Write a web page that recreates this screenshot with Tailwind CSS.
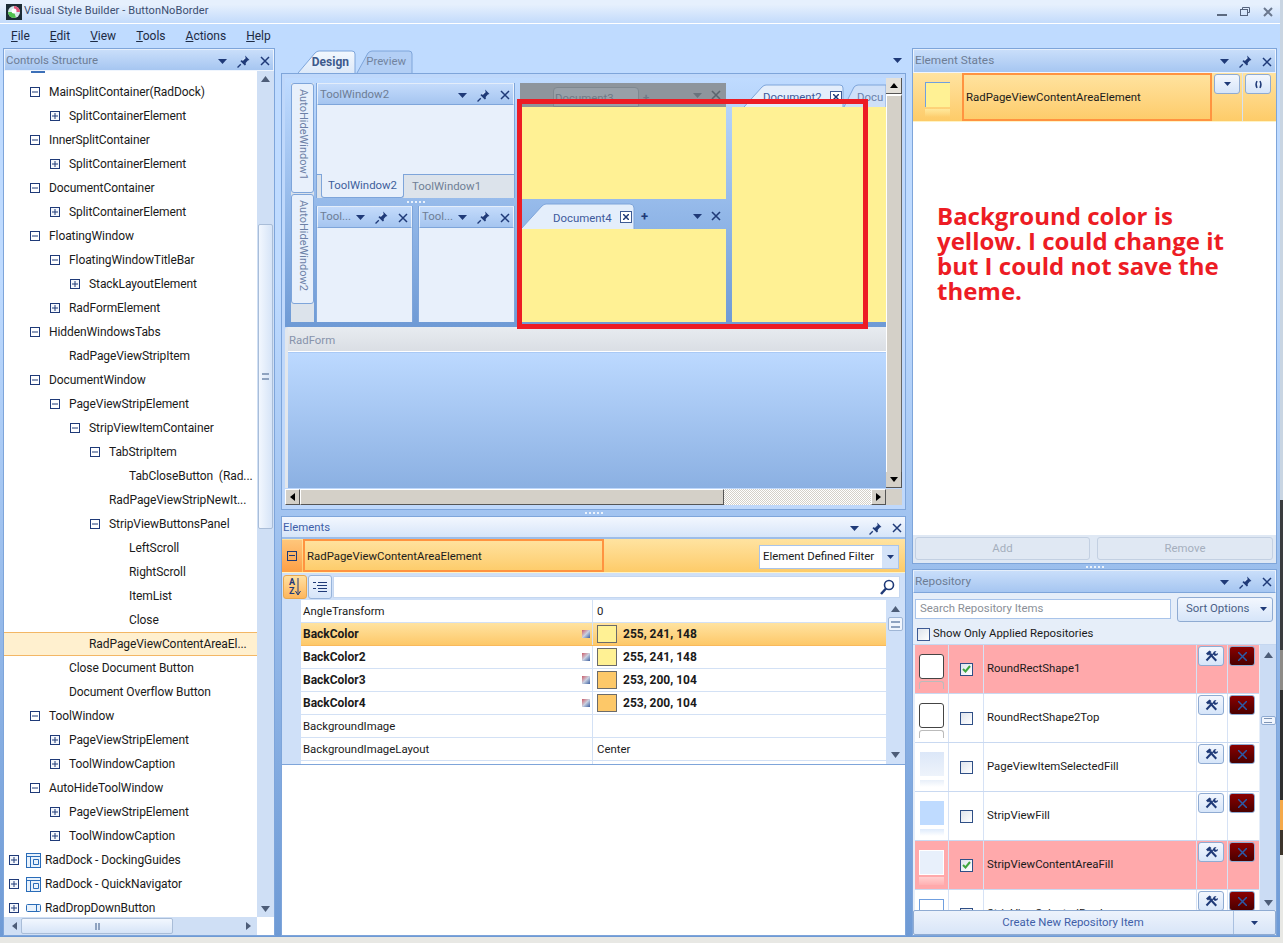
<!DOCTYPE html>
<html lang="en">
<head>
  <meta charset="UTF-8" />
  <title>Visual Style Builder - ButtonNoBorder</title>
  <script src="https://cdn.jsdelivr.net/npm/@tailwindcss/browser@4"></script>
</head>
<body class="m-0 bg-[#e8e8e4] font-['Roboto',sans-serif] text-[11.4px] text-[#1a1a1a]">
<div class="relative w-[1283px] h-[943px] overflow-hidden flex">

  <div class="w-[1280px] h-[937px] flex flex-col bg-linear-to-b from-[#bfdbff] from-30% to-[#6e9ad5]">

    <!-- Title bar -->
    <div class="h-[24px] shrink-0 flex items-center pl-[6px] border-b border-white bg-linear-to-b from-[#e6f0fd] from-20% to-[#c3dbfb] text-[#3c4e70] text-[11px]">
      <svg width="16" height="16" viewBox="0 0 16 16" class="mr-[2px]">
        <rect width="16" height="16" fill="#1c2c35"/>
        <circle cx="8" cy="8" r="6" fill="#d8e8ec"/>
        <path d="M8 2a6 6 0 0 1 6 6H8z" fill="#e0567a"/>
        <path d="M2 8a6 6 0 0 0 6 6 6 6 0 0 0 2-.4L8 8z" fill="#52c04f"/>
        <circle cx="8" cy="7" r="2.5" fill="#ffffff"/>
      </svg>
      <span class="tracking-[0.1px]">Visual Style Builder - ButtonNoBorder</span>
      <div class="ml-auto flex items-center gap-[13px] pr-[7px]">
        <div class="w-[10px] h-[2px] mt-[6px] bg-[#5c6a80]"></div>
        <svg width="10" height="9" viewBox="0 0 10 9" fill="none" stroke="#55637c"><path d="M2.5 2V.5h7v5H8"/><rect x=".5" y="2.5" width="7" height="6"/></svg>
        <svg width="10" height="10" viewBox="0 0 10 10" stroke="#6b788e" stroke-width="2"><path d="M1 1l8 8M9 1L1 9"/></svg>
      </div>
    </div>

    <!-- Menu -->
    <div class="h-[24px] shrink-0 flex items-center gap-[20px] pl-[11px] text-[12px] text-[#1c2a44]">
      <span><u>F</u>ile</span><span><u>E</u>dit</span><span><u>V</u>iew</span><span><u>T</u>ools</span><span><u>A</u>ctions</span><span><u>H</u>elp</span>
    </div>

    <div class="flex-1 min-h-0 flex pl-[3px] pr-[3px] pb-[1px] gap-[6px]">

      <!-- Controls Structure -->
      <div class="w-[272px] shrink-0 flex flex-col border border-[#7ea5da] bg-white">
        <div class="h-[22px] shrink-0 flex items-center pl-[1px] pt-[1px] border border-white/70 bg-linear-to-b from-[#c9defa] to-[#a6c6f1] text-[#6d7d95]">
          Controls Structure<span data-icons class="ml-auto"></span>
        </div>
        <div class="flex-1 min-h-0 flex">
          <div class="relative w-[253px] overflow-hidden text-[12px] tracking-[-0.08px]">
            <div class="absolute left-[27px] top-0 w-[14px] h-[2px] bg-[#3d70b8]"></div>
            <div id="tree" class="pt-[9px]"></div>
          </div>
          <div class="flex-1 bg-[#cfdff5] relative flex flex-col items-center">
            <svg width="9" height="6" class="mt-[5px]"><path d="M0 6L4.5 0 9 6z" fill="#4d5d78"/></svg>
            <div class="w-[15px] h-[305px] mt-[142px] border border-[#a9bdd8] rounded-[2px] bg-linear-to-r from-[#f2f7fe] to-[#d6e4f7] flex items-center justify-center">
              <div class="w-[7px] h-[7px] border-y-[2px] border-[#8fa3c0]"></div>
            </div>
            <svg width="9" height="6" class="mt-auto mb-[5px]"><path d="M0 0L4.5 6 9 0z" fill="#4d5d78"/></svg>
          </div>
        </div>
        <div class="h-[18px] shrink-0 flex">
          <div class="w-[253px] bg-[#cfdff5] flex items-center pl-[8px]">
            <svg width="5" height="8"><path d="M5 0L0 4l5 4z" fill="#4d5d78"/></svg>
            <div class="w-[152px] h-[16px] ml-[4px] border border-[#a9bdd8] rounded-[2px] bg-linear-to-b from-[#f2f7fe] to-[#d6e4f7] flex items-center justify-center">
              <div class="w-[5px] h-[7px] border-x-[2px] border-[#8fa3c0]"></div>
            </div>
            <svg width="5" height="8" class="ml-auto mr-[6px]"><path d="M0 0l5 4-5 4z" fill="#4d5d78"/></svg>
          </div>
        </div>
      </div>

      <!-- Centre column -->
      <div class="w-[625px] shrink-0 flex flex-col pt-[2px]">
        <!-- Design / Preview tabs -->
        <div class="h-[23px] shrink-0 flex items-end pl-[17px] relative text-[12px]">
          <div class="relative w-[58px] h-[23px] flex items-center justify-end pr-[7px] font-bold text-[#3e5a8c]">
            <svg class="absolute inset-0" width="58" height="23"><defs><linearGradient id="t1" x1="0" y1="0" x2="0" y2="1"><stop offset="0" stop-color="#f3f8fe"/><stop offset="1" stop-color="#dde9f9"/></linearGradient></defs><path d="M0 23L17 3Q19 1 21 1H54Q57 1 57 4V23" fill="url(#t1)" stroke="#7ea5da"/></svg>
            <span class="relative">Design</span>
          </div>
          <div class="relative w-[57px] h-[23px] flex items-center justify-end pr-[7px] text-[#72849f]">
            <svg class="absolute inset-0" width="57" height="23"><path d="M1 23L12 3Q14 1 16 1H53Q56 1 56 4V23" fill="#b3cff5" stroke="#7ea5da"/></svg>
            <span class="relative text-[11.4px]">Preview</span>
          </div>
          <svg width="9" height="5" class="absolute right-[4px] top-[8px]"><path d="M0 0h9L4.5 5z" fill="#1f3a78"/></svg>
        </div>

        <!-- Design surface -->
        <div class="h-[437px] shrink-0 border border-[#7ea5da] bg-[#bfd8fb] pl-[3px] pt-[4px] pr-[3px] flex flex-col">
          <div class="flex min-h-0 h-[410px]">
            <div class="w-[601px] flex flex-col">
              <div class="relative h-[249px] shrink-0 overflow-hidden bg-linear-to-b from-[#bfdbff] to-[#6e9ad5] pl-[6px] pt-[5px] flex">
                <!-- AutoHide strip -->
                <div class="w-[23px] h-[239px] shrink-0 flex flex-col gap-[1px] bg-[#dce3eb] text-[11px]">
                  <div class="h-[110px] border border-[#7ea5da] rounded-[3px] bg-[#e8f0fb] flex justify-center pt-[5px] text-[#6c80a6]"><span class="[writing-mode:vertical-rl]">AutoHideWindow1</span></div>
                  <div class="h-[110px] border border-[#7ea5da] rounded-[3px] bg-[#e8f0fb] flex justify-center pt-[5px] text-[#6c80a6]"><span class="[writing-mode:vertical-rl]">AutoHideWindow2</span></div>
                </div>
                <!-- Tool windows -->
                <div class="w-[199px] h-[239px] ml-[2px] shrink-0 flex flex-col">
                  <div class="h-[115px] shrink-0 flex flex-col border-x border-[#7ea5da] bg-[#e8f0fb]">
                    <div class="h-[22px] shrink-0 flex items-center pl-[2px] pt-[1px] border border-white/70 border-b-[#7ea5da] bg-linear-to-b from-[#c4dbfb] to-[#a5c5f0] text-[#6d7d95]">ToolWindow2<span data-icons class="ml-auto"></span></div>
                    <div class="flex-1"></div>
                    <div class="h-[24px] shrink-0 flex bg-[#dce3eb] border-t border-[#7ea5da]">
                      <div class="ml-[4px] w-[83px] -mt-[1px] h-[24px] bg-[#e8f0fb] border-x border-b border-[#7ea5da] rounded-b-[3px] text-[#3e5f9c] flex items-center justify-center">ToolWindow2</div>
                      <div class="pl-[8px] flex items-center text-[#6f7f95]">ToolWindow1</div>
                    </div>
                  </div>
                  <div class="h-[8px] shrink-0 flex items-center justify-center"><div class="w-[18px] border-t-[2px] border-dotted border-white/80"></div></div>
                  <div class="flex-1 flex gap-[5px]">
                    <div class="w-[97px] flex flex-col border-x border-[#7ea5da] bg-[#e8f0fb]">
                      <div class="h-[22px] shrink-0 flex items-center pl-[2px] border border-white/70 border-b-[#7ea5da] bg-linear-to-b from-[#c4dbfb] to-[#a5c5f0] text-[#6d7d95]">Tool...<span data-icons class="ml-auto"></span></div>
                    </div>
                    <div class="w-[97px] flex flex-col border-x border-[#7ea5da] bg-[#e8f0fb]">
                      <div class="h-[22px] shrink-0 flex items-center pl-[2px] border border-white/70 border-b-[#7ea5da] bg-linear-to-b from-[#c4dbfb] to-[#a5c5f0] text-[#6d7d95]">Tool...<span data-icons class="ml-auto"></span></div>
                    </div>
                  </div>
                </div>
                <!-- Document3 / Document4 -->
                <div class="w-[206px] h-[239px] ml-[5px] shrink-0 flex flex-col">
                  <div class="h-[24px] shrink-0 relative bg-[#8e959c] text-[#6f7a86]">
                    <div class="absolute left-[33px] top-[4px] w-[86px] h-[20px] bg-[#98a0a8] border border-[#7f8890] rounded-t-[4px] pl-[1px] pt-[2px]">Document3</div>
                    <div class="absolute left-[123px] top-[6px] font-bold">+</div>
                    <svg width="9" height="5" class="absolute left-[173px] top-[10px]"><path d="M0 0h9L4.5 5z" fill="#6a737c"/></svg>
                    <svg width="10" height="10" class="absolute left-[191px] top-[7px]" stroke="#5c656e" stroke-width="1.6"><path d="M1 1l8 8M9 1L1 9"/></svg>
                  </div>
                  <div class="h-[92px] shrink-0 bg-[#fff194]"></div>
                  <div class="h-[3px] shrink-0"></div>
                  <div class="h-[27px] shrink-0 relative">
                    <svg class="absolute left-0 top-0" width="116" height="27"><path d="M1 27L22 4Q24 2 26 2H110Q114 2 114 6V27" fill="#e4eefb" stroke="#7ea5da"/></svg>
                    <span class="absolute left-[33px] top-[8px] text-[#3e5a9c]">Document4</span>
                    <div class="absolute left-[100px] top-[9px] w-[12px] h-[12px] border border-[#3d5a94] bg-white flex items-center justify-center"><svg width="6" height="6" stroke="#1f3a78" stroke-width="1.5"><path d="M0 0l6 6M6 0L0 6"/></svg></div>
                    <span class="absolute left-[121px] top-[8px] text-[13px] leading-[14px] font-bold text-[#1f3a78]">+</span>
                    <svg width="9" height="5" class="absolute left-[173px] top-[12px]"><path d="M0 0h9L4.5 5z" fill="#1f3a78"/></svg>
                    <svg width="10" height="10" class="absolute left-[191px] top-[9px]" stroke="#1f3a78" stroke-width="1.6"><path d="M1 1l8 8M9 1L1 9"/></svg>
                  </div>
                  <div class="flex-1 bg-[#fff194]"></div>
                </div>
                <!-- Document2 -->
                <div class="w-[154px] h-[239px] ml-[6px] shrink-0 flex flex-col">
                  <div class="h-[24px] shrink-0 relative overflow-hidden">
                    <svg class="absolute left-0 top-0" width="154" height="24"><path d="M12 24L30 4Q32 2 34 2H108Q111 2 111 5V24" fill="#e4eefb" stroke="#7ea5da"/><path d="M112 24L122 4Q124 2 126 2H154V24" fill="#cfe0f8" stroke="#7ea5da"/></svg>
                    <span class="absolute left-[31px] top-[6px] text-[#3e5a9c]">Document2</span>
                    <div class="absolute left-[98px] top-[8px] w-[12px] h-[12px] border border-[#3d5a94] bg-white flex items-center justify-center"><svg width="6" height="6" stroke="#1f3a78" stroke-width="1.5"><path d="M0 0l6 6M6 0L0 6"/></svg></div>
                    <span class="absolute left-[125px] top-[6px] text-[#6a80ac]">Docu</span>
                  </div>
                  <div class="flex-1 bg-[#fff194]"></div>
                </div>
              </div>
              <!-- RadForm -->
              <div class="flex-1 min-h-0 flex flex-col bg-[#dfe4ea] rounded-tl-[3px] border-l-[3px] border-[#e3e7ec]">
                <div class="h-[25px] shrink-0 flex items-center pl-[1px] pt-[3px] border-b border-white bg-linear-to-b from-[#e8ecf0] to-[#dadee4] text-[#8793ab]">RadForm</div>
                <div class="flex-1 border-t border-[#a9c9f5] bg-linear-to-b from-[#bcd9ff] to-[#8bb0e2]"></div>
              </div>
            </div>
            <!-- vertical scrollbar -->
            <div class="w-[16px] shrink-0 bg-[#d4d0c8] flex flex-col">
              <div class="h-[16px] shrink-0 border-b border-r border-[#555] bg-[#e4e1da] flex items-center justify-center"><svg width="8" height="5" class="shrink-0"><path d="M0 5L4 0l4 5z" fill="#000"/></svg></div>
              <div class="flex-1 border-r border-[#666] border-t-[2px] border-l border-t-white border-l-white"></div>
              <div class="h-[16px] shrink-0 border-b border-r border-[#555] bg-[#d4d0c8] flex items-center justify-center"><svg width="8" height="5" class="shrink-0"><path d="M0 0l4 5 4-5z" fill="#000"/></svg></div>
            </div>
          </div>
          <!-- horizontal scrollbar -->
          <div class="h-[16px] mt-[1px] shrink-0 flex">
            <div class="w-[15px] border border-white border-b-[#555] border-r-[#555] bg-[#d4d0c8] flex items-center justify-center"><svg width="5" height="8"><path d="M5 0L0 4l5 4z" fill="#000"/></svg></div>
            <div class="w-[424px] border-l border-t border-white border-b border-b-[#555] border-r border-r-[#555] bg-[#d4d0c8]"></div>
            <div class="w-[147px] bg-[repeating-conic-gradient(#d4d0c8_0%_25%,#ffffff_0%_50%)] bg-[length:2px_2px]"></div>
            <div class="w-[15px] border border-white border-b-[#555] border-r-[#555] bg-[#d4d0c8] flex items-center justify-center"><svg width="5" height="8"><path d="M0 0l5 4-5 4z" fill="#000"/></svg></div>
            <div class="w-[16px] bg-[#d4d0c8]"></div>
          </div>
        </div>

        <div class="h-[6px] shrink-0 flex items-center justify-center"><div class="w-[18px] border-t-[2px] border-dotted border-white/80"></div></div>

        <!-- Elements -->
        <div class="flex-1 min-h-0 flex flex-col border border-[#7ea5da] bg-white">
          <div class="h-[22px] shrink-0 flex items-center pl-[1px] pt-[1px] bg-linear-to-b from-[#f3f7fe] to-[#d6e5f9] text-[#3f5fa8] border-b-[2px] border-[#9dbde8]">
            Elements<span data-icons class="ml-auto"></span>
          </div>
          <div class="h-[34px] shrink-0 flex items-center bg-linear-to-b from-[#ffe3a0] to-[#fdcb68] border-b border-[#fff3c4]">
            <div class="w-[20px] h-[32px] mr-[1px] bg-linear-to-b from-[#ffc67a] to-[#fd9f44] flex items-center justify-center"><div class="w-[10px] h-[10px] border border-[#1f3a78] flex items-center justify-center"><div class="w-[6px] h-[1px] bg-[#1f3a78]"></div></div></div>
            <div class="w-[301px] h-[33px] border-[2px] border-[#ff9340] flex items-center pl-[2px] pt-[3px] text-[#1b1b1b]">RadPageViewContentAreaElement</div>
            <div class="ml-auto mr-[6px] mt-[2px] w-[140px] h-[24px] flex items-center border border-[#a9c4ea] bg-white pl-[3px]">Element Defined Filter
              <div class="ml-auto w-[16px] h-full bg-[#d4e3f8] flex items-center justify-center"><svg width="7" height="4"><path d="M0 0h7L3.5 4z" fill="#1f3a78"/></svg></div>
            </div>
          </div>
          <div class="h-[27px] shrink-0 flex items-center bg-[#cfe0f8] pl-[1px] pr-[5px]">
            <div class="w-[24px] h-[24px] rounded-[3px] border border-[#e8a850] bg-linear-to-b from-[#ffe0a0] to-[#fdb65c] flex items-center justify-center text-[#1f3a78] text-[9px] leading-[9px] font-bold"><span class="flex flex-col"><span>A</span><span>Z</span></span><svg width="6" height="18"><path d="M3 0v16M0.5 13L3 17l2.5-4" stroke="#1f3a78" fill="none"/></svg></div>
            <div class="w-[24px] h-[24px] ml-[1px] rounded-[3px] border border-[#98b4da] bg-linear-to-b from-[#f3f7fe] to-[#d6e5f9] flex items-center justify-center"><svg width="14" height="14" stroke="#1f3a78"><path d="M0 2.500h3M5 2.500h9M4 5.500h10M0 8.500h3M5 8.500h9M5 11.500h9"/></svg></div>
            <div class="flex-1 h-[22px] ml-[1px] bg-white border border-[#c5d7f0] flex items-center justify-end pr-[4px]"><svg width="16" height="16" fill="none" stroke="#1f3a78"><circle cx="10" cy="6" r="4.500" stroke-width="1.600"/><path d="M7 9.500L2 15" stroke-width="2.500"/></svg></div>
          </div>
          <div class="h-[165px] shrink-0 flex border-b border-[#7ea5da] overflow-hidden">
            <div class="w-[19px] shrink-0 bg-[#cfe0f8]"></div>
            <div id="grid" class="w-[585px] shrink-0"></div>
            <div class="flex-1 bg-[#cfe0f8] flex flex-col items-center">
              <svg width="9" height="6" class="mt-[6px]"><path d="M0 6L4.5 0 9 6z" fill="#4d5d78"/></svg>
              <div class="w-[15px] h-[14px] mt-[5px] border border-[#9fb6d6] rounded-[2px] bg-[#f0f5fd] flex items-center justify-center"><div class="w-[9px] h-[7px] border-y-[2px] border-[#8fa3c0]"></div></div>
              <svg width="9" height="6" class="mt-auto mb-[6px]"><path d="M0 0L4.5 6 9 0z" fill="#4d5d78"/></svg>
            </div>
          </div>
        </div>
      </div>

      <!-- Right column -->
      <div class="flex-1 min-w-0 flex flex-col">
        <!-- Element States -->
        <div class="h-[516px] shrink-0 flex flex-col border border-[#7ea5da] bg-white">
          <div class="h-[24px] shrink-0 flex items-center pl-[1px] border border-white/70 bg-linear-to-b from-[#c9defa] to-[#a6c6f1] text-[#6d7d95] text-[11.8px]">
            Element States<span data-icons class="ml-auto"></span>
          </div>
          <div class="h-[49px] shrink-0 flex bg-linear-to-b from-[#ffe3a0] to-[#fdcb68] border-b border-[#fff3c4]">
            <div class="w-[49px] flex flex-col items-center pt-[9px]">
              <div class="w-[25px] h-[25px] border-t border-l border-[#6f9fe0] bg-[#fff194]"></div>
              <div class="w-[25px] h-[8px] mt-[2px] bg-linear-to-b from-[#ffe89a] to-transparent"></div>
            </div>
            <div class="w-[250px] border-[2px] border-[#ff9340] flex items-center pl-[2px] pt-[2px] text-[#1b1b1b]">RadPageViewContentAreaElement</div>
            <div class="w-[31px] border-r border-[#d6e2f2] pt-[1px] pl-[2px]">
              <div class="w-[26px] h-[20px] border border-[#8fabd2] rounded-[3px] bg-linear-to-b from-[#f3f7fe] to-[#d6e5f9] flex items-center justify-center"><svg width="7" height="4"><path d="M0 0h7L3.500 4z" fill="#1f3a78"/></svg></div>
            </div>
            <div class="pt-[1px] pl-[2px]">
              <div class="w-[26px] h-[20px] border border-[#8fabd2] rounded-[3px] bg-linear-to-b from-[#f3f7fe] to-[#d6e5f9] flex items-center justify-center"><svg width="9" height="9" fill="none" stroke="#1f3a78" stroke-width="1.400"><path d="M3 1Q1 4.500 3 8M6 1Q8 4.500 6 8"/></svg></div>
            </div>
          </div>
          <div class="flex-1 min-h-0 pt-[81px] pl-[24px] text-[#ed1c24] text-[24px] leading-[25px] font-bold font-['Open_Sans',sans-serif] whitespace-nowrap">Background color is<br />yellow. I could change it<br />but I could not save the<br />theme.</div>
          <div class="h-[28px] shrink-0 flex gap-[7px] px-[2px] pt-[2px] bg-[#dfe8f4]">
            <div class="w-[175px] h-[23px] border border-[#c3d0e2] rounded-[3px] bg-[#e0e8f3] flex items-center justify-center text-[#a5afbd]">Add</div>
            <div class="w-[176px] h-[23px] border border-[#c3d0e2] rounded-[3px] bg-[#e0e8f3] flex items-center justify-center text-[#a5afbd]">Remove</div>
          </div>
        </div>
        <div class="h-[5px] shrink-0 flex items-center justify-center"><div class="w-[18px] border-t-[2px] border-dotted border-white/80"></div></div>
        <!-- Repository -->
        <div class="flex-1 min-h-0 flex flex-col border border-[#7ea5da] bg-[#e6eef9]">
          <div class="h-[23px] shrink-0 flex items-center pl-[1px] border border-white/70 border-b-[#7ea5da] bg-linear-to-b from-[#c9defa] to-[#a6c6f1] text-[#6d7d95] text-[11.8px]">
            Repository<span data-icons class="ml-auto"></span>
          </div>
          <div class="h-[29px] shrink-0 flex items-center pl-[2px] pt-[3px]">
            <div class="w-[256px] h-[20px] border border-[#a9c4ea] bg-white flex items-center pl-[4px] text-[#8a8f98]">Search Repository Items</div>
            <div class="w-[96px] h-[25px] ml-[6px] border border-[#8fabd2] rounded-[3px] bg-linear-to-b from-[#f3f7fe] to-[#d6e5f9] flex items-center pl-[8px] text-[#4a5f86]">Sort Options<svg width="7" height="4" class="ml-auto mr-[5px]"><path d="M0 0h7L3.500 4z" fill="#1f3a78"/></svg></div>
          </div>
          <div class="h-[22px] shrink-0 flex items-center pl-[4px] pt-[2px] gap-[3px]"><div class="w-[13px] h-[13px] border border-[#3d5a94] bg-linear-to-br from-[#dfe4ec] to-white"></div>Show Only Applied Repositories</div>
          <div class="flex-1 min-h-0 flex border-t border-[#c5d7f0] overflow-hidden">
            <div id="repo" class="w-[344px] shrink-0 ml-[2px] overflow-hidden h-[267px] bg-white"></div>
            <div class="flex-1 h-[265px] bg-[#cbdcf4] flex flex-col items-center ml-[1px]">
              <svg width="9" height="6" class="mt-[7px]"><path d="M0 6L4.500 0 9 6z" fill="#4d5d78"/></svg>
              <div class="w-[15px] h-[9px] mt-[58px] border border-[#8fabd2] rounded-[2px] bg-[#f0f5fd] flex items-center justify-center"><div class="w-[8px] h-[5px] border-y border-[#7f95b5]"></div></div>
              <svg width="9" height="6" class="mt-auto mb-[4px]"><path d="M0 0L4.500 6 9 0z" fill="#4d5d78"/></svg>
            </div>
          </div>
          <div class="h-[25px] shrink-0 flex border border-[#8fabd2] rounded-[2px] bg-linear-to-b from-[#edf3fc] to-[#d8e5f8] text-[#3f5fa8]">
            <div class="flex-1 flex items-center justify-center pr-[1px] border-r border-[#a9c0e0]">Create New Repository Item</div>
            <div class="w-[41px] flex items-center justify-center"><svg width="7" height="4"><path d="M0 0h7L3.500 4z" fill="#1f3a78"/></svg></div>
          </div>
        </div>
      </div>
    </div>
  </div>

  <!-- window behind, seen at the right edge -->
  <div class="w-[3px] h-[943px] shrink-0 flex flex-col">
    <div class="h-[500px] bg-[#c9d5e2]"></div>
    <div class="h-[150px] bg-[#3a3c3e]"></div>
    <div class="h-[40px] bg-[#8d8a86]"></div>
    <div class="h-[110px] bg-[#2e2e2e]"></div>
    <div class="h-[30px] bg-[#f4a94a]"></div>
    <div class="h-[25px] bg-[#3c342a]"></div>
    <div class="flex-1 bg-[#e8e8e4]"></div>
  </div>

  <!-- annotation -->
  <div class="absolute left-[517px] top-[99px] w-[351px] h-[230px] border-[5px] border-[#ed1c24]"></div>
</div>

<script>
  // header buttons shared by all the dock panels
  const headerIcons = `<span class="inline-flex items-center gap-[10px] pr-[3px]">
    <svg width="9" height="5"><path d="M0 0h9L4.500 5z" fill="#1f3a78"/></svg>
    <svg width="13" height="13" viewBox="0 0 12 12"><path d="M7.500 .5l4 4-1.500.5-2 2.300.2 1.800-1 .7-4-4 .7-1 1.800.2 2.300-2z" fill="#1f3a78"/><path d="M7.300 2.500L5 5" stroke="#cfe0f8"/><path d="M3.500 8.500L.5 11.500" stroke="#1f3a78" stroke-width="1.200"/></svg>
    <svg width="10" height="10" stroke="#1f3a78" stroke-width="1.500"><path d="M1 1l8 8M9 1L1 9"/></svg>
  </span>`;
  document.querySelectorAll('[data-icons]').forEach(el => el.innerHTML = headerIcons);

  const plus = `<svg width="10" height="10" stroke="#1f3a78"><rect x=".5" y=".5" width="9" height="9" fill="#f4f7fc"/><path d="M2 5h6M5 2v6"/></svg>`;
  const minus = `<svg width="10" height="10" stroke="#1f3a78"><rect x=".5" y=".5" width="9" height="9" fill="#fff"/><path d="M2 5h6"/></svg>`;
  const dockIcon = `<svg width="15" height="15" fill="none" stroke="#2a6cb8"><rect x=".5" y=".5" width="14" height="14" fill="#e8f2fc"/><path d="M.5 3.500h14M4.500 3.500v11M7.500 6.500h5v5h-5z"/></svg>`;
  const btnIcon = `<svg width="15" height="8" fill="none" stroke="#2a6cb8"><rect x=".5" y=".5" width="14" height="7" rx="1" fill="#e8f2fc"/><path d="M10.500.5v7"/></svg>`;

  // [text, level, toggle]  level gives the indent, toggle: + - or none
  const rows = [
    ['MainSplitContainer(RadDock)', 1, '-'], ['SplitContainerElement', 2, '+'], ['InnerSplitContainer', 1, '-'],
    ['SplitContainerElement', 2, '+'], ['DocumentContainer', 1, '-'], ['SplitContainerElement', 2, '+'],
    ['FloatingWindow', 1, '-'], ['FloatingWindowTitleBar', 2, '-'], ['StackLayoutElement', 3, '+'],
    ['RadFormElement', 2, '+'], ['HiddenWindowsTabs', 1, '-'], ['RadPageViewStripItem', 2, ''],
    ['DocumentWindow', 1, '-'], ['PageViewStripElement', 2, '-'], ['StripViewItemContainer', 3, '-'],
    ['TabStripItem', 4, '-'], ['TabCloseButton  (Rad...', 5, ''], ['RadPageViewStripNewIt...', 4, ''],
    ['StripViewButtonsPanel', 4, '-'], ['LeftScroll', 5, ''], ['RightScroll', 5, ''], ['ItemList', 5, ''], ['Close', 5, ''],
    ['RadPageViewContentAreaEl...', 3, '', true], ['Close Document Button', 2, ''], ['Document Overflow Button', 2, ''],
    ['ToolWindow', 1, '-'], ['PageViewStripElement', 2, '+'], ['ToolWindowCaption', 2, '+'],
    ['AutoHideToolWindow', 1, '-'], ['PageViewStripElement', 2, '+'], ['ToolWindowCaption', 2, '+'],
  ];
  let treeHtml = rows.map(([text, level, toggle, selected]) => {
    const rowCls = selected ? 'bg-[#fff0cf] border-y border-[#f3b765]' : '';
    const icon = toggle ? `<span class="absolute top-[7px]" style="left:${6 + level * 20}px">${toggle === '+' ? plus : minus}</span>` : '';
    return `<div class="relative h-[24px] flex items-center whitespace-pre ${rowCls}">${icon}<span class="absolute" style="left:${25 + level * 20}px">${text}</span></div>`;
  }).join('');
  treeHtml += [['RadDock - DockingGuides', dockIcon], ['RadDock - QuickNavigator', dockIcon], ['RadDropDownButton', btnIcon]].map(([text, ic]) =>
    `<div class="h-[24px] flex items-center pl-[5px]">${plus}<span class="ml-[7px] mr-[4px] flex">${ic}</span>${text}</div>`).join('');
  document.getElementById('tree').innerHTML = treeHtml;

  const flag = `<span class="ml-auto mr-[2px] w-[8px] h-[8px] bg-linear-to-br from-[#c85a6a] via-[#c8d0e0] to-[#3f5f9f]"></span>`;
  const props = [
    ['AngleTransform', '0'], ['BackColor', '255, 241, 148', '#fff194', true], ['BackColor2', '255, 241, 148', '#fff194'],
    ['BackColor3', '253, 200, 104', '#fdc868'], ['BackColor4', '253, 200, 104', '#fdc868'],
    ['BackgroundImage', ''], ['BackgroundImageLayout', 'Center'], ['', ''],
  ];
  document.getElementById('grid').innerHTML = props.map(([name, val, color, hot]) => {
    const rowCls = hot ? 'bg-linear-to-b from-[#ffe3a0] to-[#fdc868] border-[#f9b95c]' : 'border-[#d3e1f5]';
    return `<div class="h-[23px] flex border-b ${rowCls}">
      <div class="w-[292px] flex items-center pl-[2px] border-r border-[#d3e1f5] ${color ? 'font-bold text-[12px]' : 'pt-[2px]'}">${name}${color ? flag : ''}</div>
      <div class="flex-1 flex items-center pl-[4px] ${color ? 'font-bold text-[12px]' : 'pt-[2px]'}">${color ? `<span class="w-[20px] h-[18px] mr-[6px] border border-[#6b6b6b]" style="background:${color}"></span>` : ''}${val}</div>
    </div>`;
  }).join('');

  const tools = `<svg width="13" height="12" viewBox="0 0 13 12"><path d="M1 3.500L4.500 .5l2 1.500-1 1 6.500 7-1.500 1.500-6.500-7-1 1z" fill="#1f3a78"/><path d="M1.500 10.500l6-6.500" stroke="#1f3a78" stroke-width="2"/><path d="M7.500 4L9 1.500 11.500 1 10 3l1 1 2-1-.5 2-2.500 1z" fill="#1f3a78"/></svg>`;
  const cross = `<svg width="9" height="9" stroke="#2a5aa8" stroke-width="1.500"><path d="M0 0l9 9M9 0L0 9"/></svg>`;
  const thumbs = {
    round: `<div class="w-[25px] h-[25px] border border-[#444] rounded-[3px] bg-white"></div><div class="w-[25px] h-[8px] mt-[2px] border-t border-x border-[#bbb] rounded-t-[3px]"></div>`,
    item: `<div class="w-[24px] h-[24px] bg-linear-to-b from-[#dce7f8] to-[#eef3fb]"></div><div class="w-[24px] h-[7px] mt-[4px] bg-linear-to-b from-[#e8eff9] to-white"></div>`,
    strip: `<div class="w-[24px] h-[24px] bg-[#bfdbff]"></div><div class="w-[24px] h-[7px] mt-[4px] bg-linear-to-b from-[#dfebfc] to-white"></div>`,
    area: `<div class="w-[25px] h-[25px] border border-white bg-[#e8f0fb]"></div><div class="w-[25px] h-[8px] mt-[2px] bg-linear-to-b from-[#ffd0d0] to-[#ffb0b2]"></div>`,
    sel: `<div class="w-[25px] h-[25px] border border-[#6f9fe0] bg-white"></div>`,
  };
  const items = [
    ['RoundRectShape1', 'round', true], ['RoundRectShape2Top', 'round'], ['PageViewItemSelectedFill', 'item'],
    ['StripViewFill', 'strip'], ['StripViewContentAreaFill', 'area', true], ['StripViewSelectedBorder', 'sel'],
  ];
  const check = `<svg width="9" height="8" fill="none" stroke="#3fa63f" stroke-width="2"><path d="M1 4l2.500 2.500L8 1"/></svg>`;
  document.getElementById('repo').innerHTML = items.map(([name, thumb, applied]) => `
    <div class="h-[49px] shrink-0 flex border-b border-[#c9d9f1] ${applied ? 'bg-[#ffa9ab]' : 'bg-white'}">
      <div class="w-[34px] flex flex-col items-center pt-[9px] border-r border-[#d6e2f5]">${thumbs[thumb]}</div>
      <div class="w-[35px] flex items-center justify-center border-r border-[#d6e2f5]"><span class="w-[13px] h-[13px] border border-[#2f4f86] bg-linear-to-br from-[#dfe4ec] to-white flex items-center justify-center">${applied ? check : ''}</span></div>
      <div class="w-[213px] flex items-center pl-[3px] border-r border-[#d6e2f5]">${name}</div>
      <div class="w-[31px] pt-[1px] pl-[1px] border-r border-[#d6e2f5]"><span class="w-[26px] h-[20px] border border-[#8fabd2] rounded-[3px] bg-linear-to-b from-[#f3f7fe] to-[#d6e5f9] flex items-center justify-center">${tools}</span></div>
      <div class="flex-1 pt-[1px] pl-[1px]"><span class="w-[26px] h-[20px] border border-[#8fabd2] rounded-[3px] bg-linear-to-b from-[#8b0000] to-[#4a0000] flex items-center justify-center">${cross}</span></div>
    </div>`).join('');
</script>
</body>
</html>
